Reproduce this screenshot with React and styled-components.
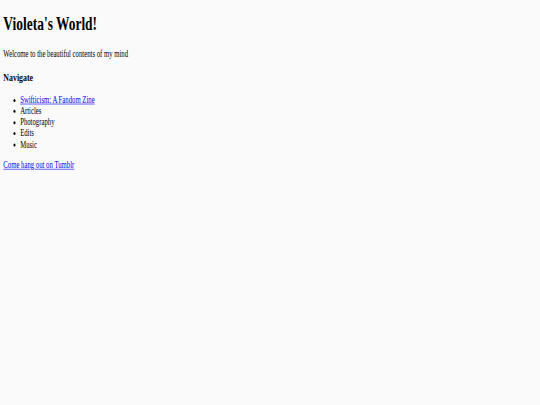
import React from 'react';
import styled, { createGlobalStyle } from 'styled-components';

const GlobalStyle = createGlobalStyle`
  html, body {
    margin: 0;
    padding: 0;
    background: #fafafa;
    overflow: hidden;
  }
`;

const Frame = styled.div`
  width: 540px;
  height: 405px;
  overflow: hidden;
`;

// the shot is a 1280px wide page squeezed into 540x405
const Page = styled.div`
  display: flow-root;
  width: 1264px;
  height: 660px;
  padding: 0 8px;
  transform: scale(0.42, 0.603);
  transform-origin: 0 0;
  font-family: "Liberation Serif", "Times New Roman", serif;
  font-size: 16px;
  line-height: 18.4px;
  color: #000;
`;

const Title = styled.h1`
  margin: 21.44px 0;
  font-size: 32px;
  line-height: 36.8px;
  font-weight: bold;
`;

const Intro = styled.p`
  margin: 16px 0;
`;

const SectionTitle = styled.h3`
  margin: 18.72px 0;
  font-size: 18.72px;
  line-height: 21.5px;
  font-weight: bold;
`;

const NavList = styled.ul`
  margin: 16px 0;
  padding-left: 40px;
  list-style: disc;
`;

const Link = styled.a`
  color: #0000ee;
  text-decoration: underline;
`;

const links = [
  { label: 'Swifticism: A Fandom Zine', href: '#' },
  { label: 'Articles' },
  { label: 'Photography' },
  { label: 'Edits' },
  { label: 'Music' },
];

export default function App() {
  return (
    <>
      <GlobalStyle />
      <Frame>
        <Page>
          <Title>Violeta's World!</Title>
          <Intro>Welcome to the beautiful contents of my mind</Intro>
          <SectionTitle>Navigate</SectionTitle>
          <NavList>
            {links.map((item) =>
              <li key={item.label}>
                {item.href ? <Link href={item.href}>{item.label}</Link> : item.label}
              </li>
            )}
          </NavList>
          <Intro>
            <Link href="#">Come hang out on Tumblr</Link>
          </Intro>
        </Page>
      </Frame>
    </>
  );
}
